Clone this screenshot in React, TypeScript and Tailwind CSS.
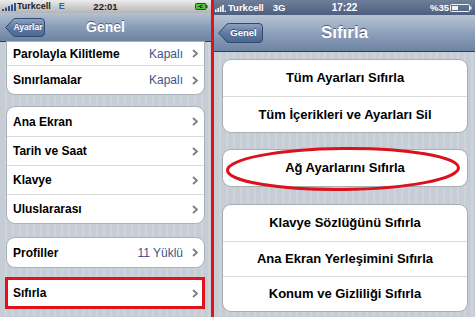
import React from "react";

const font = "font-['Liberation_Sans','Arial',sans-serif]";

const Chevron = () => (
  <svg width="6" height="9" viewBox="0 0 6 9" className="shrink-0">
    <path d="M1 1l4 3.5L1 8" fill="none" stroke="#7b7b7b" strokeWidth="1.8" />
  </svg>
);

const BackButton = ({ label, w, h, text }: { label: string; w: number; h: number; text: string }) => (
  <div className="relative shrink-0" style={{ width: w, height: h }}>
    <svg width={w} height={h} viewBox={`0 0 ${w} ${h}`} className="absolute inset-0">
      <defs>
        <linearGradient id={`bb-${label}`} x1="0" y1="0" x2="0" y2="1">
          <stop offset="0" stopColor="#8ea3c2" />
          <stop offset="0.5" stopColor="#5f7aa3" />
          <stop offset="1" stopColor="#4a6792" />
        </linearGradient>
      </defs>
      <path
        d={`M0.6 ${h / 2} L${h / 2 - 1} 1 Q${h / 2} 0.5 ${h / 2 + 1.5} 0.5 H${w - 4} Q${w - 0.5} 0.5 ${w - 0.5} 4 V${h - 4} Q${w - 0.5} ${h - 0.5} ${w - 4} ${h - 0.5} H${h / 2 + 1.5} Q${h / 2} ${h - 0.5} ${h / 2 - 1} ${h - 1} Z`}
        fill={`url(#bb-${label})`}
        stroke="#34496c"
        strokeWidth="1"
      />
    </svg>
    <span
      className={`relative flex h-full items-center justify-center pl-[6px] font-bold text-white ${text} [text-shadow:0_-1px_0_rgba(0,0,0,0.45)]`}
    >
      {label}
    </span>
  </div>
);

const LeftRow = ({ label, value, h = "h-[29px]", first = false }: { label: string; value?: string; h?: string; first?: boolean }) => (
  <div className={`flex ${h} items-center pl-[6px] pr-[6px] ${first ? "" : "border-t border-[#dadada]"}`}>
    <span className="flex-1 text-[12px] font-bold text-black">{label}</span>
    {value && <span className="mr-[9px] text-[12px] text-[#3a5588]">{value}</span>}
    <Chevron />
  </div>
);

const RightRow = ({ label, first = false, h = "h-[36px]" }: { label: string; first?: boolean; h?: string }) => (
  <div className={`flex ${h} items-center justify-center ${first ? "" : "border-t border-[#dcdcdc]"}`}>
    <span className="text-[13px] font-bold text-black">{label}</span>
  </div>
);

const stripes =
  "bg-[image:repeating-linear-gradient(90deg,#c7cdd5_0px,#c7cdd5_5px,#ced4db_5px,#ced4db_7px)]";

function LeftScreen() {
  return (
    <div className="flex h-[317px] w-[211px] shrink-0 flex-col overflow-hidden">
      {/* status bar */}
      <div className="grid h-[13px] grid-cols-[1fr_auto_1fr] items-center bg-gradient-to-b from-[#ececec] to-[#b4b4b4] px-[2px]">
        <div className="flex items-center">
          <svg width="14" height="8" viewBox="0 0 14 8">
            <rect x="0" y="6" width="2" height="2" fill="#33518a" />
            <rect x="3" y="4.5" width="2" height="3.5" fill="#33518a" />
            <rect x="6" y="3" width="2" height="5" fill="#33518a" />
            <rect x="9" y="1.5" width="2" height="6.5" fill="#33518a" />
            <rect x="12" y="0" width="2" height="8" fill="#33518a" />
          </svg>
          <span className="ml-[1px] text-[9px] font-bold leading-none text-[#222]">Turkcell</span>
          <span className="ml-[8px] text-[9px] font-bold leading-none text-[#2f5fb0]">E</span>
        </div>
        <span className="text-[9.5px] font-bold leading-none text-[#222]">22:01</span>
        <div className="flex justify-end pr-[1px]">
          <svg width="13" height="7" viewBox="0 0 13 7">
            <rect x="0.5" y="0.5" width="10.5" height="6" rx="1" fill="#4cc636" stroke="#2b4a1f" />
            <rect x="11" y="2" width="1.5" height="3" fill="#2b4a1f" />
            <path d="M3 3.5h2.5M5.5 2v3M5.5 2.5h2M5.5 4.5h2" stroke="#1d3512" strokeWidth="0.9" />
          </svg>
        </div>
      </div>
      {/* nav bar */}
      <div className="grid h-[29px] grid-cols-[1fr_auto_1fr] items-center border-b border-[#2d3f5c] bg-gradient-to-b from-[#b4c0d1] via-[#8a9db8] to-[#6c83a2] px-[5px]">
        <div className="flex">
          <BackButton label="Ayarlar" w={40} h={19} text="text-[8.5px]" />
        </div>
        <span className="text-[14px] font-bold text-white [text-shadow:0_-1px_0_rgba(40,55,80,0.7)]">Genel</span>
        <div />
      </div>
      {/* content */}
      <div className={`flex flex-1 flex-col ${stripes} px-[7px]`}>
        <div className="overflow-hidden rounded-b-[8px] bg-white shadow-[0_0_0_1px_#aab1ba]">
          <LeftRow label="Parolayla Kilitleme" value="Kapalı" h="h-[23px]" first />
          <LeftRow label="Sınırlamalar" value="Kapalı" />
        </div>
        <div className="mt-[13px] overflow-hidden rounded-[8px] bg-white shadow-[0_0_0_1px_#aab1ba]">
          <LeftRow label="Ana Ekran" first />
          <LeftRow label="Tarih ve Saat" />
          <LeftRow label="Klavye" />
          <LeftRow label="Uluslararası" />
        </div>
        <div className="mt-[15px] overflow-hidden rounded-[8px] bg-white shadow-[0_0_0_1px_#aab1ba]">
          <LeftRow label="Profiller" value="11 Yüklü" first />
        </div>
        <div className="-ml-[2px] -mr-[1px] mt-[10px] flex h-[32px] items-center border-[3px] border-[#e0121c] bg-white pl-[5px] pr-[4px]">
          <span className="flex-1 text-[12px] font-bold text-black">Sıfırla</span>
          <Chevron />
        </div>
      </div>
    </div>
  );
}

function RightScreen() {
  return (
    <div className="flex h-[317px] flex-1 flex-col overflow-hidden">
      {/* status bar */}
      <div className="grid h-[15px] grid-cols-[1fr_auto_1fr] items-center bg-gradient-to-b from-[#6f7f99] to-[#4c5f7f] px-[1px]">
        <div className="flex items-center">
          <svg width="11" height="8" viewBox="0 0 11 8">
            <rect x="0" y="5.5" width="1.6" height="2.5" fill="#fff" />
            <rect x="2.4" y="4" width="1.6" height="4" fill="#fff" />
            <rect x="4.8" y="2.5" width="1.6" height="5.5" fill="#fff" />
            <rect x="7.2" y="1" width="1.6" height="7" fill="#fff" />
            <rect x="9.6" y="6.6" width="1.4" height="1.4" fill="#fff" />
          </svg>
          <span className="ml-[2px] text-[9.5px] font-bold leading-none text-white">Turkcell</span>
          <span className="ml-[9px] text-[9.5px] font-bold leading-none text-white">3G</span>
        </div>
        <span className="text-[10px] font-bold leading-none text-white">17:22</span>
        <div className="flex items-center justify-end pr-[2px]">
          <span className="text-[9.5px] font-bold leading-none text-white">%35</span>
          <svg width="22" height="8" viewBox="0 0 22 8" className="ml-[1px]">
            <rect x="0.5" y="0.5" width="19" height="7" rx="1" fill="none" stroke="#eef1f5" />
            <rect x="2" y="2" width="6" height="4" fill="#eef1f5" />
            <rect x="20" y="2.5" width="1.5" height="3" fill="#eef1f5" />
          </svg>
        </div>
      </div>
      {/* nav bar */}
      <div className="grid h-[37px] grid-cols-[1fr_auto_1fr] items-center border-b border-[#2d3f5c] bg-gradient-to-b from-[#b8c4d4] via-[#8fa1bb] to-[#6d84a3] px-[4px]">
        <div className="flex">
          <BackButton label="Genel" w={45} h={20} text="text-[9.5px]" />
        </div>
        <span className="text-[17px] font-bold text-white [text-shadow:0_-1px_0_rgba(40,55,80,0.7)]">Sıfırla</span>
        <div />
      </div>
      {/* content */}
      <div className={`relative flex flex-1 flex-col ${stripes} pl-[9px] pr-[8px] pt-[8px]`}>
        <div className="overflow-hidden rounded-[8px] bg-white shadow-[0_0_0_1px_#a9aeb5]">
          <RightRow label="Tüm Ayarları Sıfırla" first />
          <RightRow label="Tüm İçerikleri ve Ayarları Sil" />
        </div>
        <div className="mt-[18px] overflow-hidden rounded-[8px] bg-white shadow-[0_0_0_1px_#a9aeb5]">
          <RightRow label="Ağ Ayarlarını Sıfırla" first />
        </div>
        <div className="mt-[19px] overflow-hidden rounded-[8px] bg-white shadow-[0_0_0_1px_#a9aeb5]">
          <RightRow label="Klavye Sözlüğünü Sıfırla" first />
          <RightRow label="Ana Ekran Yerleşimini Sıfırla" h="h-[35px]" />
          <RightRow label="Konum ve Gizliliği Sıfırla" h="h-[35px]" />
        </div>
        <svg className="pointer-events-none absolute inset-0" width="261" height="265" viewBox="0 0 261 265">
          <ellipse cx="129" cy="117" rx="115.5" ry="20.5" fill="none" stroke="#d9121c" strokeWidth="3" transform="rotate(-0.6 129 117)" />
        </svg>
      </div>
    </div>
  );
}

export default function App() {
  return (
    <div className={`flex h-[317px] w-[475px] overflow-hidden bg-white ${font}`}>
      <LeftScreen />
      <div className="w-[3px] shrink-0 bg-[#e0121c]" />
      <RightScreen />
    </div>
  );
}
